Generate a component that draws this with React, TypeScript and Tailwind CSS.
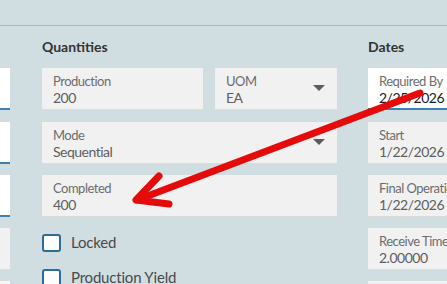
import React from "react";

const font = { fontFamily: "Lato, 'Noto Sans', sans-serif" };

function Field({
  label,
  value,
  white,
  dark,
  dropdown,
  className = "",
}: {
  label: string;
  value?: string;
  white?: boolean;
  dark?: boolean;
  dropdown?: boolean;
  className?: string;
}) {
  return (
    <div
      className={`relative h-[42px] shrink-0 pl-[11px] pt-[5px] overflow-hidden whitespace-nowrap ${
        white ? "bg-white border-b-2 border-[#3f80b0]" : "bg-[#f1f1f1] border-b border-[#dcdcdc]"
      } ${className}`}
    >
      <div className="text-[13px] leading-[16px] tracking-[-0.5px] text-[#6d6d6d]">{label}</div>
      <div
        className={`leading-[18px] text-[14px] tracking-[-0.5px] ${
          dark ? "text-[#1b1b1b]" : "text-[#5e5e5e]"
        }`}
      >
        {value}
      </div>
      {dropdown && (
        <div className="absolute right-[12px] top-[17px] w-0 h-0 border-l-[6px] border-r-[6px] border-t-[6px] border-l-transparent border-r-transparent border-t-[#5c5c5c]" />
      )}
    </div>
  );
}

function Check({ label }: { label: string }) {
  return (
    <div className="flex items-center h-[19px] gap-[10px]">
      <div className="w-[19px] h-[18px] rounded-[3px] border-2 border-[#2c6d98] bg-white shrink-0" />
      <div className="text-[15px] tracking-[-0.2px] text-[#4a4a4a] whitespace-nowrap">{label}</div>
    </div>
  );
}

export default function App() {
  return (
    <div className="relative w-[447px] h-[284px] overflow-hidden bg-[#d0dee2]" style={font}>
      <div className="h-[26px] border-b border-[#a3c0c9]" />
      <div className="flex pt-[11px]">
        {/* left cut-off column */}
        <div className="w-[10px] shrink-0 flex flex-col">
          <div className="h-[20px] mb-[11px]" />
          <div className="h-[42px] bg-white border-b-2 border-[#3f80b0]" />
          <div className="h-[42px] mt-[12px] bg-white border-b-2 border-[#3f80b0]" />
          <div className="h-[42px] mt-[11px] bg-white border-b-2 border-[#3f80b0]" />
          <div className="h-[42px] mt-[11px] bg-[#f1f1f1] border-b border-[#dcdcdc]" />
          <div className="h-[42px] mt-[11px] bg-[#f7f7f7]" />
        </div>
        {/* Quantities column */}
        <div className="ml-[32px] w-[295px] shrink-0 flex flex-col">
          <div className="h-[20px] leading-[20px] mb-[11px] text-[14px] font-bold text-[#333333]">Quantities</div>
          <div className="flex gap-[12px]">
            <Field label="Production" value="200" className="w-[161px]" />
            <Field label="UOM" value="EA" dropdown className="flex-1" />
          </div>
          <Field label="Mode" value="Sequential" dropdown className="mt-[12px]" />
          <Field label="Completed" value="400" className="mt-[11px]" />
          <div className="mt-[16px] flex flex-col gap-[16px]">
            <Check label="Locked" />
            <Check label="Production Yield" />
          </div>
        </div>
        {/* Dates column */}
        <div className="ml-[31px] w-[130px] shrink-0 flex flex-col">
          <div className="h-[20px] leading-[20px] mb-[11px] text-[14px] font-bold text-[#333333]">Dates</div>
          <Field label="Required By" value="2/25/2026" white dark />
          <Field label="Start" value="1/22/2026" className="mt-[12px]" />
          <Field label="Final Operation" value="1/22/2026" className="mt-[11px]" />
          <Field label="Receive Time" value="2.00000" className="mt-[11px]" />
          <Field label="" value="" className="mt-[11px]" />
        </div>
      </div>
      <svg className="absolute inset-0 pointer-events-none" width="447" height="284" viewBox="0 0 447 284">
        <g stroke="#e60b0b" strokeWidth="7" strokeLinecap="round" strokeLinejoin="round" fill="none">
          <line x1="420" y1="93" x2="137" y2="200" />
          <polyline points="159,176 136,200 169,204" />
        </g>
      </svg>
    </div>
  );
}
